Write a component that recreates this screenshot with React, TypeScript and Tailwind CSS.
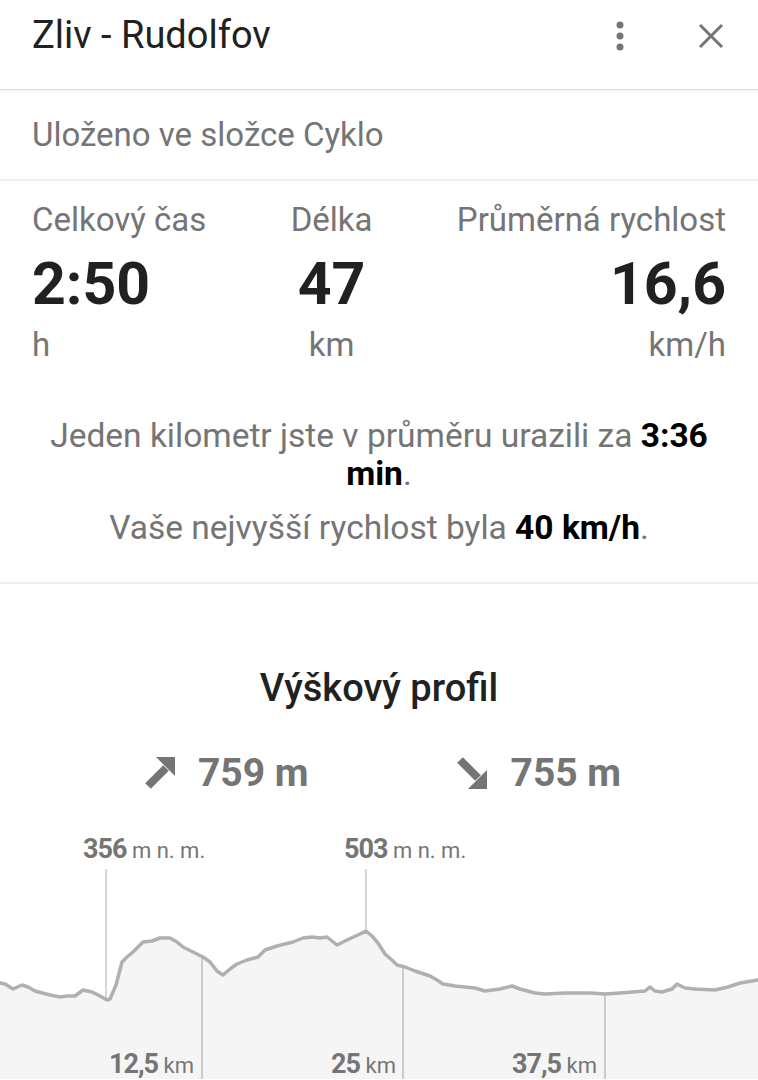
import * as React from 'react';

const profile: [number, number][] = [
  [0, 984], [5, 985], [13, 990], [22, 986], [28, 988], [35, 992], [50, 996], [60, 998],
  [67, 997], [75, 997], [83, 991], [92, 993], [100, 997], [107, 1001], [110, 1000],
  [116, 986], [122, 963], [127, 958], [133, 953], [143, 943], [152, 942], [160, 939],
  [170, 939], [177, 943], [183, 948], [193, 953], [203, 958], [210, 963], [217, 972],
  [223, 976], [230, 970], [237, 965], [247, 961], [258, 958], [265, 951], [277, 947],
  [293, 943], [303, 939], [312, 938], [320, 939], [327, 938], [337, 946], [347, 941],
  [360, 935], [366, 932], [372, 937], [378, 944], [385, 955], [393, 962], [397, 966],
  [405, 968], [415, 972], [430, 977], [437, 981], [443, 985], [455, 987], [475, 989],
  [485, 992], [500, 990], [512, 987], [520, 990], [535, 994], [545, 995], [565, 994],
  [590, 994], [605, 995], [620, 994], [645, 992], [650, 988], [655, 992], [662, 993],
  [672, 990], [677, 985], [685, 989], [695, 990], [715, 991], [728, 988], [740, 984],
  [758, 981],
];

const TOP = 820;

const line = profile.map(([x, y]) => `${x},${y - TOP}`).join(' ');
const area = `M0,260 L${profile.map(([x, y]) => `${x},${y - TOP}`).join(' L')} L758,260 Z`;

const ArrowUp = () => (
  <svg width="32" height="34" viewBox="0 0 32 34">
    <line x1="5" y1="30" x2="23" y2="12" stroke="#757575" strokeWidth="8" />
    <polygon points="13,1 32,1 32,20" fill="#757575" />
  </svg>
);

const ArrowDown = () => (
  <svg width="32" height="34" viewBox="0 0 32 34">
    <line x1="5" y1="4" x2="23" y2="22" stroke="#757575" strokeWidth="8" />
    <polygon points="13,33 32,33 32,14" fill="#757575" />
  </svg>
);

const Stat = ({ label, value, unit, align }: { label: string; value: string; unit: string; align: string }) => (
  <div className={`flex flex-col ${align}`}>
    <div className="text-[33px] leading-[36px] text-[#757575]">{label}</div>
    <div className="mt-[14px] text-[59px] leading-[64px] font-bold text-[#212121]">{value}</div>
    <div className="mt-[11px] text-[33px] leading-[36px] text-[#757575]">{unit}</div>
  </div>
);

export default function App() {
  return (
    <div className="w-[758px] h-[1080px] overflow-hidden bg-white" style={{ fontFamily: 'Roboto, "Noto Sans", sans-serif' }}>
      <div className="h-[90px] pb-[18px] flex items-center px-8 border-b border-[#e0e0e0] shadow-[0_1px_3px_rgba(0,0,0,0.08)]">
        <div className="flex-1 text-[38px] text-[#212121]">Zliv - Rudolfov</div>
        <svg width="12" height="30" viewBox="0 0 12 30" className="mr-[72px]">
          <circle cx="6" cy="4" r="3.5" fill="#757575" />
          <circle cx="6" cy="15" r="3.5" fill="#757575" />
          <circle cx="6" cy="26" r="3.5" fill="#757575" />
        </svg>
        <svg width="26" height="26" viewBox="0 0 26 26" className="mr-[2px]">
          <path d="M2 2 L24 24 M24 2 L2 24" stroke="#757575" strokeWidth="3" />
        </svg>
      </div>

      <div className="h-[91px] flex items-center px-8 border-b-2 border-[#eeeeee]">
        <span className="text-[33px] text-[#757575]">Uloženo ve složce Cyklo</span>
      </div>

      <div className="px-8 pt-[21px] flex justify-between">
        <Stat label="Celkový čas" value="2:50" unit="h" align="items-start" />
        <Stat label="Délka" value="47" unit="km" align="items-center" />
        <Stat label="Průměrná rychlost" value="16,6" unit="km/h" align="items-end" />
      </div>

      <div className="px-8 pt-[54px] pb-[35px] text-center text-[33.5px] leading-[38px] text-[#757575] border-b-2 border-[#eeeeee]">
        <p>
          Jeden kilometr jste v průměru urazili za <b className="text-black">3:36 min</b>.
        </p>
        <p className="mt-[16px]">
          Vaše nejvyšší rychlost byla <b className="text-black">40 km/h</b>.
        </p>
      </div>

      <div className="pt-[82px] flex flex-col items-center">
        <div className="text-[38px] leading-[44px] font-medium text-[#212121]">Výškový profil</div>
        <div className="mt-[41px] ml-[6px] flex items-center">
          <div className="flex items-center gap-[23px]">
            <ArrowUp />
            <span className="text-[39px] leading-[44px] font-bold text-[#757575]">759 m</span>
          </div>
          <div className="ml-[146px] flex items-center gap-[24px]">
            <ArrowDown />
            <span className="text-[39px] leading-[44px] font-bold text-[#757575]">755 m</span>
          </div>
        </div>
      </div>

      <div className="relative h-[260px] mt-[24px]">
        <svg width="758" height="260" viewBox="0 0 758 260" className="absolute left-0 top-0">
          <path d={area} fill="#f5f5f5" />
          <line x1="106" y1="50" x2="106" y2={1001 - TOP} stroke="#c8c8c8" strokeWidth="1.5" />
          <line x1="366" y1="50" x2="366" y2={932 - TOP} stroke="#c8c8c8" strokeWidth="1.5" />
          <line x1="202" y1={958 - TOP} x2="202" y2="260" stroke="#bdbdbd" strokeWidth="1.5" />
          <line x1="403" y1={968 - TOP} x2="403" y2="260" stroke="#bdbdbd" strokeWidth="1.5" />
          <line x1="605" y1={995 - TOP} x2="605" y2="260" stroke="#bdbdbd" strokeWidth="1.5" />
          <polyline points={line} fill="none" stroke="#b0b0b0" strokeWidth="3.5" strokeLinejoin="round" strokeLinecap="round" />
        </svg>
        <div className="absolute left-[83px] top-[10px] text-[#757575] whitespace-nowrap">
          <span className="text-[27px] font-bold tracking-[-1px]">356</span>
          <span className="text-[22px]"> m n. m.</span>
        </div>
        <div className="absolute left-[344px] top-[10px] text-[#757575] whitespace-nowrap">
          <span className="text-[27px] font-bold tracking-[-1px]">503</span>
          <span className="text-[22px]"> m n. m.</span>
        </div>
        <div className="absolute right-[564px] top-[225px] text-[#757575] whitespace-nowrap">
          <span className="text-[27px] font-bold tracking-[-1px]">12,5</span>
          <span className="text-[22px]"> km</span>
        </div>
        <div className="absolute right-[362px] top-[225px] text-[#757575] whitespace-nowrap">
          <span className="text-[27px] font-bold tracking-[-1px]">25</span>
          <span className="text-[22px]"> km</span>
        </div>
        <div className="absolute right-[161px] top-[225px] text-[#757575] whitespace-nowrap">
          <span className="text-[27px] font-bold tracking-[-1px]">37,5</span>
          <span className="text-[22px]"> km</span>
        </div>
      </div>
    </div>
  );
}
